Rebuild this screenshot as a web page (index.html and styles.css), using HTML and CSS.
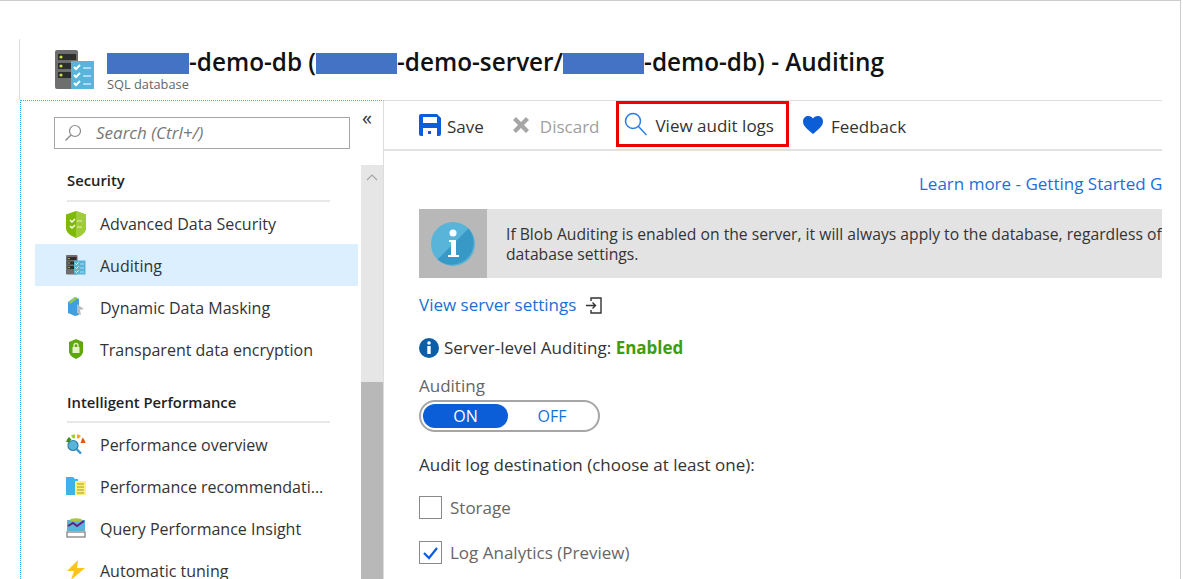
FILE: index.html
```html
<!DOCTYPE html>
<html lang="en">
<head>
  <meta charset="UTF-8">
  <title>Auditing</title>
  <link rel="stylesheet" href="styles.css">
</head>
<body>

  <svg class="defs" width="0" height="0" aria-hidden="true">
    <symbol id="audit-icon" viewBox="0 0 40 40">
      <rect x="0" y="0" width="23" height="39" rx="2" fill="#6e6e6e"/>
      <rect x="3" y="4" width="18" height="6" fill="#2d2d2d"/>
      <rect x="3" y="13" width="18" height="6" fill="#2d2d2d"/>
      <rect x="3" y="22" width="18" height="6" fill="#2d2d2d"/>
      <circle cx="6" cy="7" r="1.6" fill="#c6e04a"/>
      <circle cx="6" cy="16" r="1.6" fill="#c6e04a"/>
      <circle cx="6" cy="25" r="1.6" fill="#c6e04a"/>
      <rect x="16" y="11" width="23" height="28" fill="#59b4d9"/>
      <path d="M19 17l2 2 4-4M19 25l2 2 4-4M19 33l2 2 4-4" fill="none" stroke="#fff" stroke-width="2"/>
      <path d="M28 18h8M28 26h8M28 34h8" stroke="#a9dcf0" stroke-width="2"/>
    </symbol>
  </svg>

  <div class="window">
    <div class="blade">

      <header class="blade-header">
        <svg class="blade-icon"><use href="#audit-icon"/></svg>
        <div>
          <h1 class="blade-title"><span class="redact redact-first"></span>-demo-db (<span class="redact redact-mid"></span>-demo-server/<span class="redact redact-last"></span>-demo-db) - Auditing</h1>
          <div class="blade-sub">SQL database</div>
        </div>
      </header>

      <div class="blade-body">
        <nav class="sidebar">
          <div class="menu">
            <div class="search">
              <svg class="search-icon" viewBox="0 0 18 18"><circle cx="11" cy="7" r="5.5" fill="none" stroke="#8a8a8a" stroke-width="1.2"/><path d="M7 11l-5.5 5.5" stroke="#8a8a8a" stroke-width="1.4"/></svg>
              <span>Search (Ctrl+/)</span>
            </div>

            <div class="menu-group">
              <div class="menu-heading">Security</div>
              <div class="menu-item">
                <svg class="menu-icon menu-icon-tall" viewBox="0 0 20 27"><path d="M10 0l10 3.500v13c0 6-5 8-10 10.500C5 24.500 0 22.500 0 16.500v-13z" fill="#7fba00"/><path d="M10 0l10 3.500v13c0 6-5 8-10 10.500z" fill="#a0cc3a"/><path d="M4 9l2 2 3-3M4 15l2 2 3-3" fill="none" stroke="#fff" stroke-width="1.4"/><path d="M11 10h5M11 16h5" stroke="#e3f0b8" stroke-width="1.2"/></svg>
                <span>Advanced Data Security</span>
              </div>
              <div class="menu-item active">
                <svg class="menu-icon"><use href="#audit-icon"/></svg>
                <span>Auditing</span>
              </div>
              <div class="menu-item">
                <svg class="menu-icon" viewBox="0 0 20 20"><path d="M2 5l7-5 4 2v16l-4 1-7-3z" fill="#3f9fe0"/><path d="M3 5l6-5 3 1-8 6z" fill="#9ccb3c"/><path d="M11 7l7 5-4 1 1 5-4-2z" fill="#bdbdbd"/></svg>
                <span>Dynamic Data Masking</span>
              </div>
              <div class="menu-item">
                <svg class="menu-icon" viewBox="0 0 20 20"><path d="M10 0l7 3v9c0 4-3 6-7 8-4-2-7-4-7-8V3z" fill="#5ea80d"/><rect x="6.500" y="8" width="7" height="6" fill="#e6f2c8"/><path d="M8 8V6.500a2 2 0 014 0V8" fill="none" stroke="#e6f2c8" stroke-width="1.300"/></svg>
                <span>Transparent data encryption</span>
              </div>
            </div>

            <div class="menu-group">
              <div class="menu-heading">Intelligent Performance</div>
              <div class="menu-item">
                <svg class="menu-icon" viewBox="0 0 20 20"><path d="M0 8a9.500 9.500 0 013-5l2.500 2.500a6 6 0 00-2 3z" fill="#3f8f1a"/><path d="M5 1.500a9.500 9.500 0 014-1.200v3.700l-2 .6z" fill="#a0cc3a"/><path d="M11 .3a9.500 9.500 0 014 1.700l-2.500 2.800-1.500-.7z" fill="#f2a91e"/><path d="M16.500 3.500a9.500 9.500 0 013 5.500h-5z" fill="#dd5a12"/><circle cx="7" cy="11.500" r="5" fill="#59b4d9" stroke="#2f7fa8" stroke-width="1.200"/><path d="M10.500 15l4.500 4.500" stroke="#2f9ad0" stroke-width="2.400"/></svg>
                <span>Performance overview</span>
              </div>
              <div class="menu-item">
                <svg class="menu-icon" viewBox="0 0 20 20"><path d="M0 1h7l2 2h3v16H0z" fill="#3fb2ee"/><rect x="9" y="5" width="11" height="14" fill="#fff27a"/><path d="M11 8h7M11 11h7M11 14h7M11 17h7" stroke="#9b9b28" stroke-width="1"/></svg>
                <span>Performance recommendati...</span>
              </div>
              <div class="menu-item">
                <svg class="menu-icon" viewBox="0 0 20 20"><path d="M1 2h18v11H1z" fill="#59b4d9"/><ellipse cx="10" cy="2" rx="6" ry="1.800" fill="#a8c83a"/><path d="M2 8l5-3 4 3 7-5" fill="none" stroke="#68217a" stroke-width="2"/><rect x="1" y="14" width="18" height="5" fill="#fff" stroke="#8a8a8a" stroke-width="1.400"/></svg>
                <span>Query Performance Insight</span>
              </div>
              <div class="menu-item">
                <svg class="menu-icon" viewBox="0 0 20 20"><path d="M12 0L1 11h7l-3 9 14-12h-8z" fill="#fcc419"/></svg>
                <span>Automatic tuning</span>
              </div>
            </div>
          </div>

          <div class="rail">
            <div class="collapse">«</div>
            <div class="scrollbar">
              <div class="scroll-up"><svg width="12" height="7" viewBox="0 0 12 7"><path d="M1 6l5-5 5 5" fill="none" stroke="#a6a6a6" stroke-width="1.200"/></svg></div>
              <div class="scroll-thumb"></div>
            </div>
          </div>
        </nav>

        <main class="main">
          <div class="toolbar">
            <div class="tool tool-save">
              <svg class="tool-icon" viewBox="0 0 22 22"><path d="M0 2a2 2 0 012-2h16l4 4v16a2 2 0 01-2 2H2a2 2 0 01-2-2z" fill="#0b5ed7"/><rect x="4" y="3" width="14" height="6" fill="#fff"/><rect x="4" y="14" width="14" height="8" fill="#fff"/><rect x="9" y="17" width="3" height="3" fill="#0b5ed7"/></svg>
              <span>Save</span>
            </div>
            <div class="tool tool-discard">
              <svg class="tool-icon-x" viewBox="0 0 20 20"><path d="M2 5l3-3 5 5 5-5 3 3-5 5 5 5-3 3-5-5-5 5-3-3 5-5z" fill="#a6a6a6"/></svg>
              <span>Discard</span>
            </div>
            <div class="tool tool-logs">
              <svg class="tool-icon-search" viewBox="0 0 23 24"><circle cx="9" cy="9" r="7.500" fill="none" stroke="#2a7de1" stroke-width="1.500"/><path d="M14.500 14.500l8 8.500" stroke="#2a7de1" stroke-width="1.500"/></svg>
              <span>View audit logs</span>
            </div>
            <div class="tool tool-feedback">
              <svg class="tool-icon-heart" viewBox="0 0 20 18"><path d="M10 18C4 13 0 10 0 5.500 0 2 2.500 0 5.500 0 7.500 0 9 1 10 2.500 11 1 12.500 0 14.500 0 17.500 0 20 2 20 5.500 20 10 16 13 10 18z" fill="#0b5ed7"/></svg>
              <span>Feedback</span>
            </div>
          </div>

          <div class="content">
            <a class="learn-more">Learn more - Getting Started G</a>

            <div class="banner">
              <div class="banner-icon">
                <svg width="44" height="44" viewBox="0 0 44 44"><circle cx="22" cy="22" r="22" fill="#59b4d9"/><path d="M6.500 37.500L37.500 6.500A22 22 0 016.500 37.500z" fill="#3999c6"/><circle cx="22" cy="11" r="3.500" fill="#fff"/><path d="M18 18h7v15h3v2H17v-2h3V20h-2z" fill="#fff"/></svg>
              </div>
              <p class="banner-text">If Blob Auditing is enabled on the server, it will always apply to the database, regardless of<br>database settings.</p>
            </div>

            <div class="server-link">
              <a>View server settings</a>
              <svg width="17" height="17" viewBox="0 0 17 17"><path d="M6 4V1h10v15H6v-3" fill="none" stroke="#333" stroke-width="1.400"/><path d="M1 8.500h9M7.500 5.500l3 3-3 3" fill="none" stroke="#333" stroke-width="1.400"/></svg>
            </div>

            <div class="status">
              <svg width="20" height="20" viewBox="0 0 20 20"><circle cx="10" cy="10" r="10" fill="#0b5ea8"/><circle cx="10" cy="5" r="1.800" fill="#fff"/><rect x="8.300" y="8" width="3.400" height="8" fill="#fff"/></svg>
              <span>Server-level Auditing: <b class="enabled">Enabled</b></span>
            </div>

            <div class="field-label">Auditing</div>
            <div class="toggle">
              <span class="toggle-on">ON</span>
              <span class="toggle-off">OFF</span>
            </div>

            <div class="dest-label">Audit log destination (choose at least one):</div>
            <label class="check-row first">
              <span class="checkbox"></span>
              <span>Storage</span>
            </label>
            <label class="check-row">
              <span class="checkbox"><svg width="17" height="14" viewBox="0 0 17 14"><path d="M2 7l5 5 8-10" fill="none" stroke="#0b5ed7" stroke-width="2.200"/></svg></span>
              <span>Log Analytics (Preview)</span>
            </label>
          </div>
        </main>
      </div>

    </div>
  </div>

</body>
</html>
```

FILE: styles.css
```css
html, body {
  margin: 0;
  height: 579px;
  overflow: hidden;
  background-color: #ffffff;
}
body {
  font-family: "Open Sans", "Noto Sans", sans-serif;
  font-size: 17px;
  line-height: 20px;
  color: #333333;
}
.defs {
  display: block;
  height: 0;
}
.window {
  box-sizing: border-box;
  width: 1181px;
  height: 579px;
  padding: 38px 0 0 19px;
  border-top: 1px solid #cccccc;
  border-right: 1px solid #cccccc;
}
.blade {
  width: 1143px;
  height: 540px;
  overflow: hidden;
}

/* header */
.blade-header {
  display: flex;
  align-items: flex-start;
  box-sizing: border-box;
  height: 61px;
  padding: 11px 0 0 35px;
  border-left: 1px solid #dddddd;
}
.blade-icon {
  width: 40px;
  height: 40px;
  margin-right: 12px;
}
.blade-title {
  margin: 0;
  font-size: 24.3px;
  line-height: 24px;
  font-weight: 600;
  color: #111111;
  white-space: nowrap;
}
.redact {
  display: inline-block;
  height: 21px;
  vertical-align: -3px;
  background-color: #4472c4;
}
.redact-first {
  width: 82px;
}
.redact-mid {
  width: 81px;
}
.redact-last {
  width: 81px;
}
.blade-sub {
  margin-top: 2px;
  font-size: 12.8px;
  line-height: 16px;
  color: #666666;
}

.blade-body {
  display: flex;
  height: 479px;
}

/* left menu */
.sidebar {
  display: flex;
  box-sizing: border-box;
  width: 364px;
  margin-left: 1px;
  border-top: 1px dotted #1fb8ee;
  border-left: 1px dotted #1fb8ee;
  border-right: 1px solid #dddddd;
}
.menu {
  width: 340px;
  padding-top: 16px;
}
.search {
  display: flex;
  align-items: center;
  box-sizing: border-box;
  width: 296px;
  height: 32px;
  margin-left: 33px;
  padding-left: 9px;
  border: 1px solid #a6a6a6;
  font-style: italic;
  color: #777777;
}
.search-icon {
  width: 18px;
  height: 18px;
  margin-right: 14px;
}
.menu-group {
  margin-top: 21px;
}
.menu-group + .menu-group {
  margin-top: 22px;
}
.menu-heading {
  width: 263px;
  margin-left: 46px;
  padding-bottom: 10px;
  border-bottom: 2px solid #e8e8e8;
  font-size: 14.8px;
  font-weight: 600;
  color: #222222;
}
.menu-group + .menu-group .menu-heading {
  padding-bottom: 9px;
}
.menu-item {
  display: flex;
  align-items: center;
  height: 42px;
  width: 292px;
  margin-left: 14px;
  padding-left: 31px;
  font-size: 16px;
  white-space: nowrap;
}
.menu-item span {
  margin-top: 2px;
}
.menu-item.active {
  background-color: #dcefff;
}
.menu-icon {
  flex: none;
  width: 20px;
  height: 20px;
  margin-right: 14px;
}
.menu-icon-tall {
  height: 27px;
  margin-top: 3px;
}
.rail {
  display: flex;
  flex-direction: column;
  width: 22px;
}
.collapse {
  height: 64px;
  padding-right: 10px;
  font-size: 20px;
  line-height: 34px;
  text-align: center;
  color: #333333;
}
.scrollbar {
  flex: 1;
  background-color: #e6e6e6;
}
.scroll-up {
  display: flex;
  align-items: center;
  justify-content: center;
  height: 24px;
}
.scroll-thumb {
  height: 197px;
  margin-top: 193px;
  background-color: #b8b8b8;
}

/* right part */
.main {
  flex: 1;
  min-width: 0;
  border-top: 1px solid #dddddd;
}
.toolbar {
  display: flex;
  align-items: flex-start;
  box-sizing: border-box;
  height: 50px;
  padding-left: 35px;
  border-bottom: 2px solid #e2e2e2;
  white-space: nowrap;
}
.tool {
  display: flex;
  align-items: center;
  height: 48px;
}
.tool span {
  margin-top: 3px;
}
.tool-icon {
  width: 22px;
  height: 22px;
  margin-right: 6px;
}
.tool-discard {
  margin-left: 27px;
  color: #a0a0a0;
}
.tool-icon-x {
  width: 20px;
  height: 20px;
  margin-right: 9px;
}
.tool-logs {
  box-sizing: border-box;
  height: 46px;
  margin-left: 17px;
  padding: 0 12px 0 5px;
  border: 3px solid #f00000;
}
.tool-icon-search {
  width: 23px;
  height: 24px;
  margin-right: 8px;
}
.tool-feedback {
  margin-left: 14px;
}
.tool-icon-heart {
  width: 20px;
  height: 18px;
  margin-right: 8px;
}
.content {
  padding: 23px 0 0 35px;
  white-space: nowrap;
  overflow: hidden;
}
a {
  color: #1a6fd8;
}
.learn-more {
  display: block;
  padding-left: 500px;
}
.banner {
  display: flex;
  align-items: center;
  height: 69px;
  margin-top: 15px;
  background-color: #e3e3e3;
}
.banner-icon {
  display: flex;
  flex: none;
  align-items: center;
  justify-content: center;
  width: 68px;
  height: 69px;
  background-color: #b8b8b8;
}
.banner-text {
  margin: 0 0 0 19px;
  font-size: 15.7px;
}
.server-link {
  display: flex;
  align-items: center;
  margin-top: 17px;
}
.server-link svg {
  margin-left: 9px;
}
.status {
  display: flex;
  align-items: center;
  margin-top: 23px;
}
.status svg {
  margin-right: 5px;
}
.enabled {
  color: #3f9c0e;
}
.field-label {
  margin-top: 18px;
  color: #666666;
}
.toggle {
  display: flex;
  align-items: center;
  box-sizing: border-box;
  width: 181px;
  height: 32px;
  margin-top: 4px;
  padding: 2px;
  border: 2px solid #a6a6a6;
  border-radius: 16px;
  font-size: 16px;
  color: #1a6fd8;
}
.toggle-on {
  width: 85px;
  height: 24px;
  line-height: 24px;
  border-radius: 12px;
  text-align: center;
  color: #ffffff;
  background-color: #0b5ed7;
}
.toggle-off {
  flex: 1;
  text-align: center;
}
.dest-label {
  margin-top: 23px;
}
.check-row {
  display: flex;
  align-items: center;
  height: 23px;
  margin-top: 22px;
  color: #666666;
}
.check-row.first {
  margin-top: 21px;
}
.checkbox {
  display: flex;
  align-items: center;
  justify-content: center;
  box-sizing: border-box;
  width: 23px;
  height: 23px;
  margin-right: 8px;
  border: 1px solid #8a8a8a;
}
```
